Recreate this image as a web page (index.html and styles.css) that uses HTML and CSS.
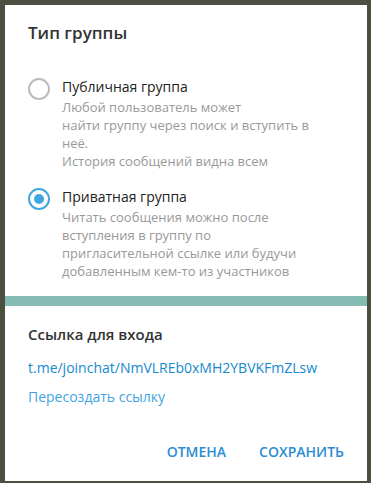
FILE: index.html
```html
<!DOCTYPE html>
<html lang="ru">
<head>
    <meta charset="UTF-8">
    <meta name="viewport" content="width=device-width, initial-scale=1.0">
    <title>Тип группы</title>
    <link rel="stylesheet" href="styles.css">
</head>
<body>
    <div class="dialog">
        <h1 class="dialog-title">Тип группы</h1>

        <div class="options">
            <label class="option">
                <span class="radio"></span>
                <span class="option-text">
                    <span class="option-title">Публичная группа</span>
                    <span class="option-desc">Любой пользователь может<br>найти группу через поиск и вступить в<br>неё.<br>История сообщений видна всем</span>
                </span>
            </label>

            <label class="option">
                <span class="radio checked"></span>
                <span class="option-text">
                    <span class="option-title">Приватная группа</span>
                    <span class="option-desc">Читать сообщения можно после<br>вступления в группу по<br>пригласительной ссылке или будучи<br>добавленным кем-то из участников</span>
                </span>
            </label>
        </div>

        <div class="divider"></div>

        <div class="invite">
            <h2 class="invite-title">Ссылка для входа</h2>
            <a class="invite-link">t.me/joinchat/NmVLREb0xMH2YBVKFmZLsw</a>
            <a class="invite-reset">Пересоздать ссылку</a>
        </div>

        <div class="actions">
            <button class="btn">ОТМЕНА</button>
            <button class="btn">СОХРАНИТЬ</button>
        </div>
    </div>
</body>
</html>
```

FILE: styles.css
```css
* {
    margin: 0;
    padding: 0;
    box-sizing: border-box;
    font-family: 'Open Sans', 'DejaVu Sans', sans-serif;
}

body {
    background: #4b5040;
    padding: 5px;
}

.dialog {
    width: 362px;
    height: 476px;
    background: #fff;
    padding-top: 17px;
}

.dialog-title {
    font-size: 17px;
    font-weight: 600;
    line-height: 22px;
    color: #333;
    padding-left: 23px;
}

.options {
    margin-top: 33px;
    padding-left: 23px;
}

.option {
    display: flex;
    align-items: flex-start;
    margin-bottom: 17px;
}

.radio {
    flex: none;
    width: 22px;
    height: 22px;
    border: 2px solid #bcbcbc;
    border-radius: 50%;
    margin-top: 1px;
    margin-right: 12px;
    display: flex;
    align-items: center;
    justify-content: center;
}

.radio.checked {
    border-color: #40a7e3;
}

.radio.checked::after {
    content: '';
    width: 10px;
    height: 10px;
    border-radius: 50%;
    background: #40a7e3;
}

.option-text {
    display: flex;
    flex-direction: column;
}

.option-title {
    font-size: 14px;
    line-height: 20px;
    color: #222;
}

.option-desc {
    margin-top: 1px;
    font-size: 13px;
    line-height: 18px;
    color: #999;
}

.divider {
    height: 10px;
    background: #84bcb4;
    margin-top: -1px;
}

.invite {
    padding: 17px 23px 0;
    display: flex;
    flex-direction: column;
    align-items: flex-start;
}

.invite-title {
    font-size: 15px;
    font-weight: 600;
    line-height: 22px;
    color: #333;
}

.invite-link {
    margin-top: 13px;
    font-size: 14px;
    line-height: 20px;
    color: #168acd;
}

.invite-reset {
    margin-top: 9px;
    font-size: 14px;
    line-height: 20px;
    color: #3fa3e2;
}

.actions {
    margin-top: 35px;
    display: flex;
    justify-content: flex-end;
    gap: 33px;
    padding-right: 23px;
}

.btn {
    border: none;
    background: none;
    font-size: 14px;
    font-weight: 600;
    line-height: 20px;
    color: #2a8dd2;
    cursor: pointer;
}
```
